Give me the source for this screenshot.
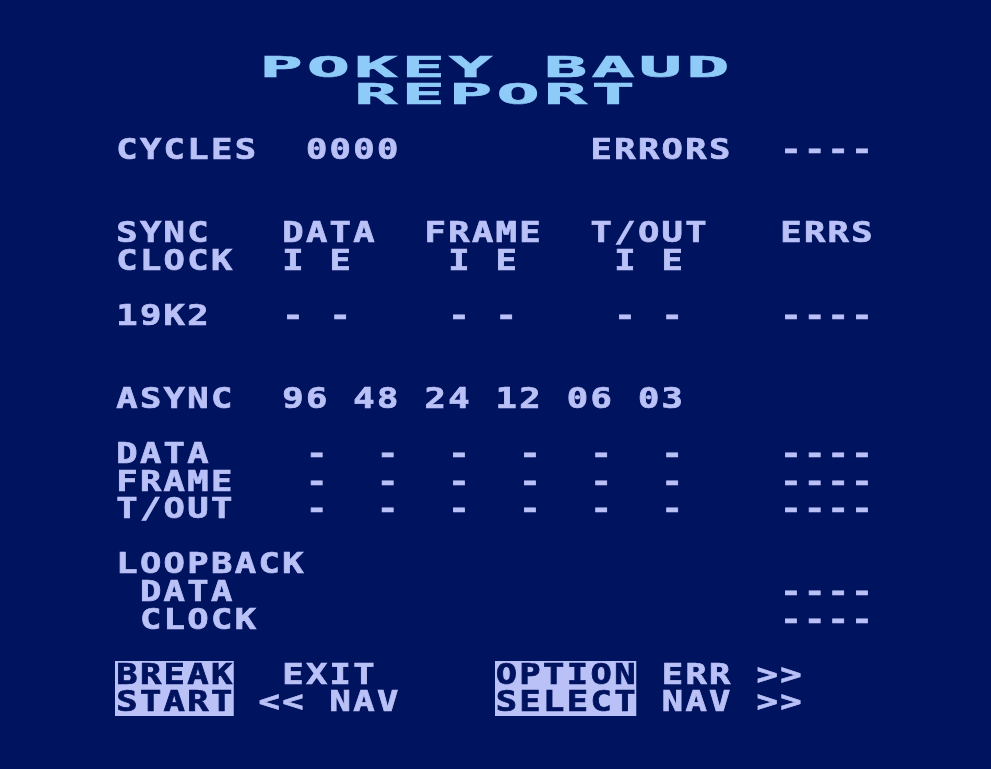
export default function App() {
  const R = "h-[27.6px] pl-[0.94px]";
  const INV5 =
    "inline-block h-[27.6px] -ml-[0.94px] mr-[0.94px] pl-[0.94px] w-[94.88px] bg-[#b9c1f7] text-[#00135e]";
  const INV6 =
    "inline-block h-[27.6px] -ml-[0.94px] mr-[0.94px] pl-[0.94px] w-[113.86px] bg-[#b9c1f7] text-[#00135e]";
  const dashes = "-  -  -  -  -  -";
  return (
    <div className="min-h-screen w-full overflow-hidden bg-[#00135e]">
      <div className="pt-[53.7px] pl-[115px]">
        <div className="origin-left scale-x-[1.25] whitespace-pre font-['DejaVu_Sans_Mono',monospace] text-[28.4px] leading-[27.6px] font-bold tracking-[1.879px] text-[#b9c1f7] [-webkit-text-stroke:0.7px_currentColor]">
          <div className="h-[27.6px] pl-[0.94px] origin-left scale-x-[2] text-[#8ecbf8]">{"   POKEY BAUD"}</div>
          <div className="h-[27.6px] pl-[0.94px] origin-left scale-x-[2] text-[#8ecbf8]">{"     REPORT"}</div>
          <div className={R}></div>
          <div className={R}>{"CYCLES  0000        ERRORS  ----"}</div>
          <div className={R}></div>
          <div className={R}></div>
          <div className={R}>{"SYNC   DATA  FRAME  T/OUT   ERRS"}</div>
          <div className={R}>{"CLOCK  I E    I E    I E"}</div>
          <div className={R}></div>
          <div className={R}>{"19K2   - -    - -    - -    ----"}</div>
          <div className={R}></div>
          <div className={R}></div>
          <div className={R}>{"ASYNC  96 48 24 12 06 03"}</div>
          <div className={R}></div>
          <div className={R}>{"DATA".padEnd(8) + dashes + "    ----"}</div>
          <div className={R}>{"FRAME".padEnd(8) + dashes + "    ----"}</div>
          <div className={R}>{"T/OUT".padEnd(8) + dashes + "    ----"}</div>
          <div className={R}></div>
          <div className={R}>{"LOOPBACK"}</div>
          <div className={R}>{" DATA".padEnd(28) + "----"}</div>
          <div className={R}>{" CLOCK".padEnd(28) + "----"}</div>
          <div className={R}></div>
          <div className={R}>
            <span className={INV5}>BREAK</span>
            {"  EXIT     "}
            <span className={INV6}>OPTION</span>
            {" ERR >>"}
          </div>
          <div className={R}>
            <span className={INV5}>START</span>
            {" << NAV    "}
            <span className={INV6}>SELECT</span>
            {" NAV >>"}
          </div>
        </div>
      </div>
    </div>
  );
}
